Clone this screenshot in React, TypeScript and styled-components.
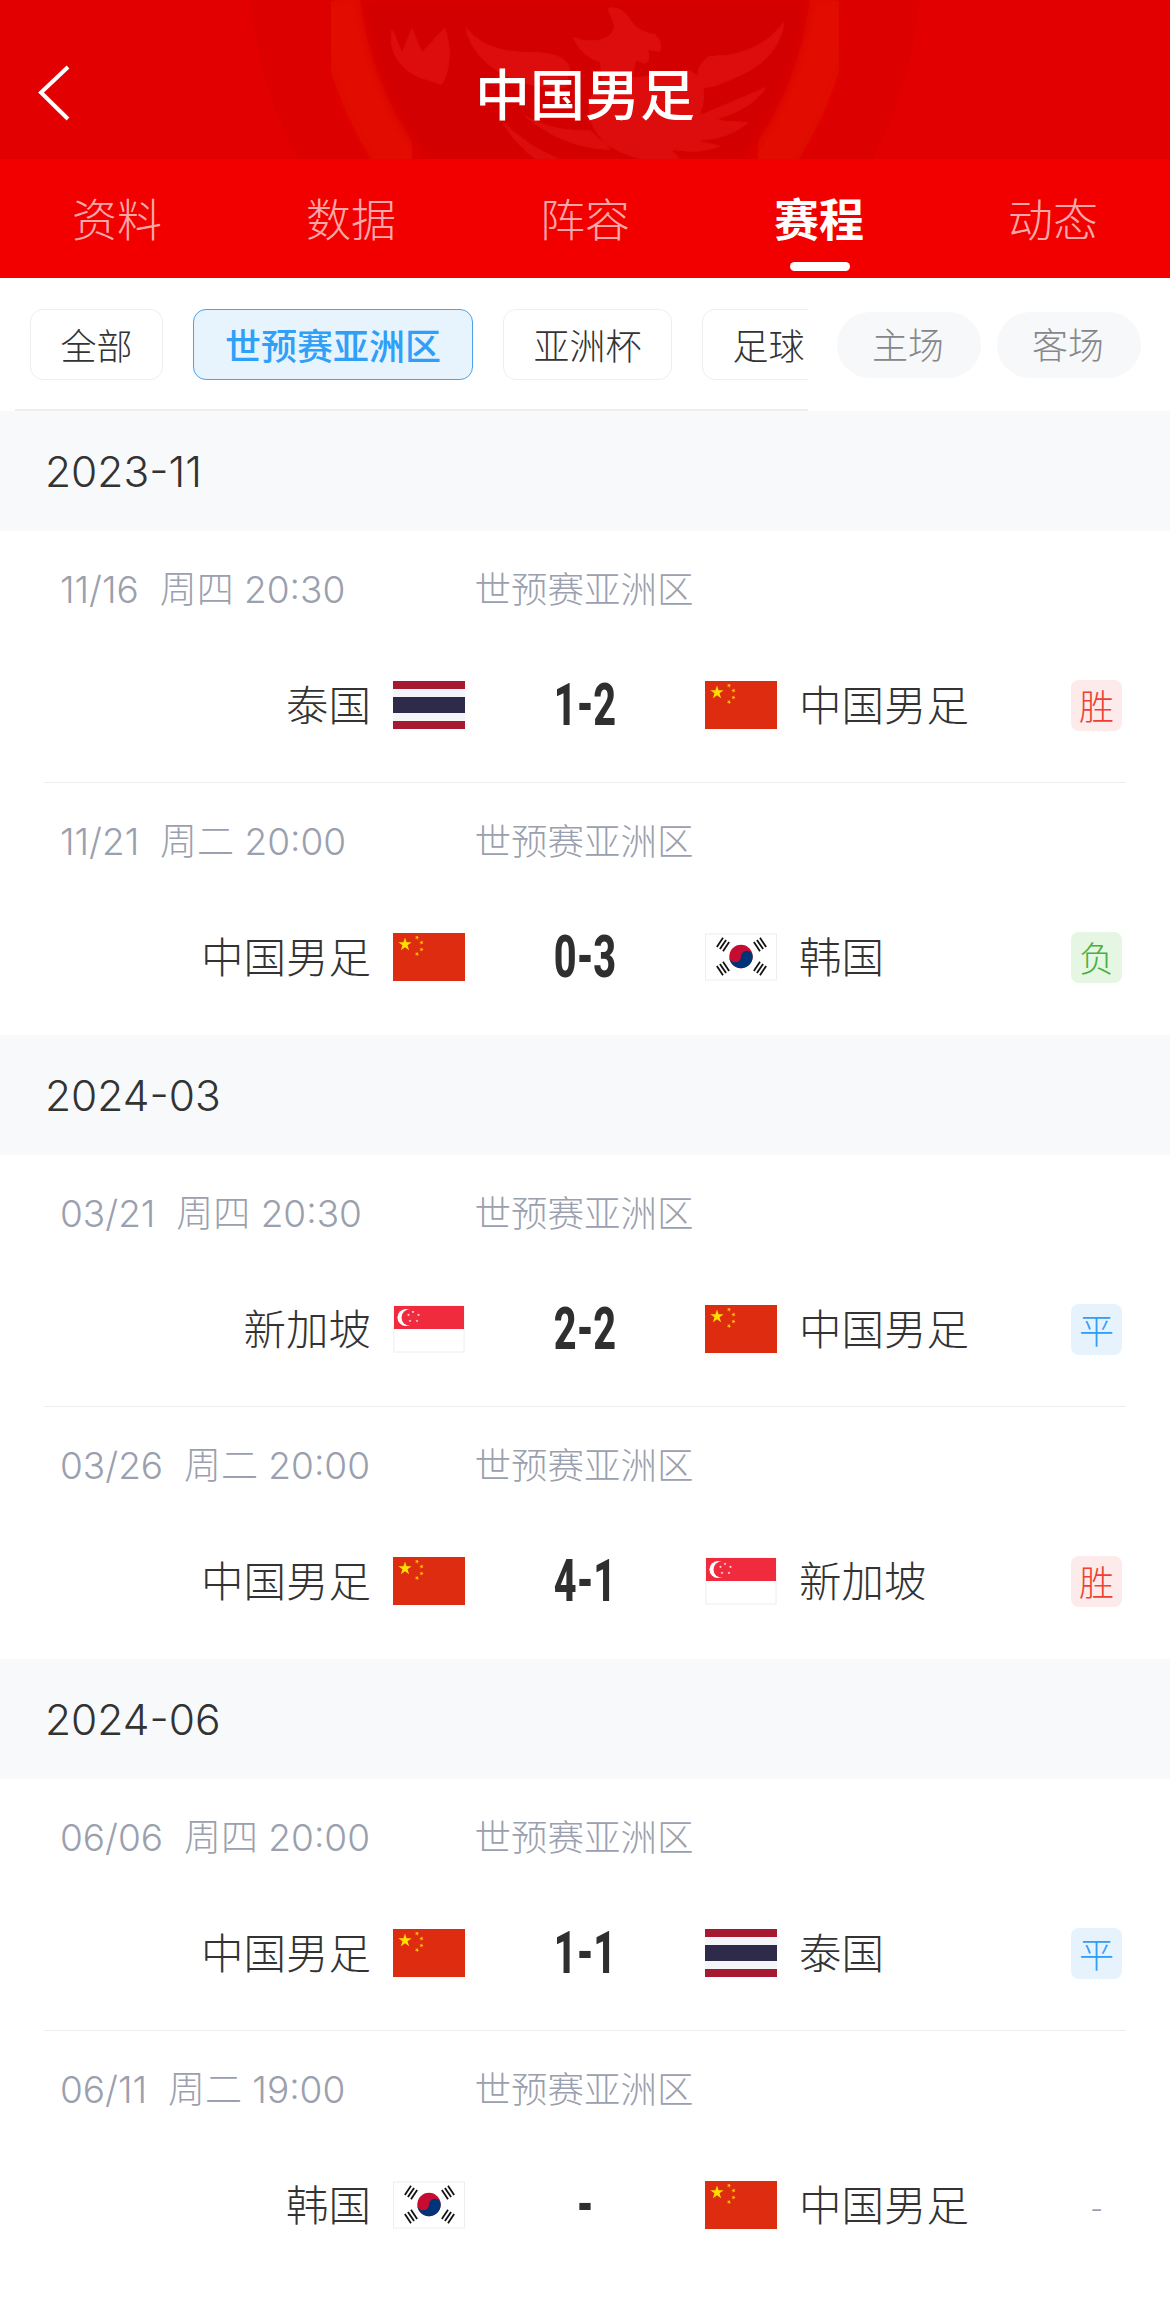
import React from "react";
import styled, { createGlobalStyle } from "styled-components";

const CJK = `"Noto Sans CJK SC", sans-serif`;
const MIX = `Inter, "Noto Sans CJK SC", sans-serif`;

const Global = createGlobalStyle`
  html, body { margin: 0; padding: 0; background: #fff; }
  * { box-sizing: border-box; }
`;

const Page = styled.div`
  width: 1170px;
  height: 2307px;
  overflow: hidden;
  background: #fff;
  font-family: ${CJK};
  color: #333;
`;

const Header = styled.header`
  position: relative;
  height: 159px;
  background: #e20000;
  display: flex;
  align-items: center;
  justify-content: center;
  overflow: hidden;
`;

const Watermark = styled.svg`
  position: absolute;
  inset: 0;
  width: 1170px;
  height: 159px;
`;

const BackButton = styled.svg`
  position: absolute;
  left: 36px;
  top: 64px;
  width: 36px;
  height: 58px;
`;

const Title = styled.h1`
  position: relative;
  margin: 0;
  padding-top: 23px;
  font-size: 55px;
  font-weight: 500;
  line-height: 70px;
  color: #fff;
`;

const Tabs = styled.nav`
  height: 119px;
  background: #f20000;
  display: grid;
  grid-template-columns: repeat(5, 234px);
`;

const Tab = styled.div<{ $active?: boolean }>`
  position: relative;
  text-align: center;
  padding-top: 28px;
  font-size: 45px;
  line-height: 62px;
  font-weight: ${(p) => (p.$active ? 700 : 300)};
  color: ${(p) => (p.$active ? "#fff" : "rgba(255,255,255,0.68)")};
`;

const TabMark = styled.span`
  position: absolute;
  left: 88px;
  bottom: 7px;
  width: 60px;
  height: 9px;
  border-radius: 5px;
  background: #fff;
`;

const FilterBar = styled.div`
  height: 133px;
  display: flex;
  background: #fff;
`;

const TagScroller = styled.div`
  width: 793px;
  margin-left: 15px;
  padding: 31px 0 0 15px;
  display: flex;
  gap: 30px;
  overflow: hidden;
  border-bottom: 2px solid #eeeeef;
`;

const Tag = styled.div<{ $active?: boolean }>`
  flex: none;
  height: 71px;
  padding: 0 ${(p) => (p.$active ? 31 : 29.5)}px 2px;
  display: flex;
  align-items: center;
  font-size: 36px;
  font-weight: ${(p) => (p.$active ? 500 : 300)};
  border-radius: 13px;
  border: 1.5px solid ${(p) => (p.$active ? "#4da3ea" : "#eeeeef")};
  background: ${(p) => (p.$active ? "#e7f4fe" : "#fff")};
  color: ${(p) => (p.$active ? "#2f9ff7" : "#333")};
`;

const Pills = styled.div`
  margin-left: 29px;
  padding-top: 34px;
  display: flex;
  gap: 16px;
`;

const Pill = styled.div`
  width: 144px;
  height: 66px;
  padding: 0 2px 4px 0;
  border-radius: 33px;
  background: #f7f8fa;
  display: flex;
  align-items: center;
  justify-content: center;
  font-size: 36px;
  font-weight: 300;
  color: #85878b;
`;

const MonthBar = styled.div`
  height: 120px;
  padding-left: 45px;
  background: #f8f9fb;
  display: flex;
  align-items: center;
  font-family: ${MIX};
  font-size: 42.5px;
  font-weight: 300;
  color: #333;
`;

const Group = styled.section`
  padding-bottom: 1px;
`;

const Match = styled.article`
  height: 251px;
  padding-top: 29px;
`;

const Divider = styled.div`
  height: 1px;
  margin: 0 44px;
  background: #eeeeef;
`;

const MetaRow = styled.div`
  height: 54px;
  padding-left: 60px;
  display: grid;
  grid-template-columns: 414px 220px;
  align-items: center;
  font-size: 36.5px;
  font-weight: 300;
  color: #9aa0ae;
`;

const DateText = styled.span`
  font-family: ${MIX};
  font-size: 37px;
  white-space: pre;
`;

const League = styled.span`
  text-align: center;
`;

const ScoreRow = styled.div`
  margin-top: 67px;
  height: 48px;
  display: grid;
  grid-template-columns: 465px 240px 1fr;
  align-items: center;
`;

const Side = styled.div<{ $home?: boolean }>`
  display: flex;
  align-items: center;
  justify-content: ${(p) => (p.$home ? "flex-end" : "flex-start")};
  gap: 22px;
  height: 48px;
`;

const TeamName = styled.span`
  font-size: 42.5px;
  font-weight: 300;
  line-height: 48px;
  margin-top: -5px;
  color: #333;
`;

const Score = styled.div`
  text-align: center;
  font-family: Roboto, "Liberation Sans", sans-serif;
  font-size: 60px;
  font-weight: 800;
  line-height: 48px;
  color: #2f2f2f;
  transform: scaleX(0.66);
`;

const RESULT = {
  胜: { bg: "#fdeaea", fg: "#ee4035" },
  负: { bg: "#e5f6e3", fg: "#46b13c" },
  平: { bg: "#e6f3fd", fg: "#2f9ff7" },
  "-": { bg: "transparent", fg: "#9aa0ae" },
} as const;

type ResultKey = keyof typeof RESULT;

const Badge = styled.span<{ $kind: ResultKey }>`
  flex: none;
  margin-left: auto;
  margin-right: 48px;
  width: 51px;
  height: 51px;
  padding-bottom: 2px;
  border-radius: 8px;
  display: flex;
  align-items: center;
  justify-content: center;
  font-size: 35px;
  font-weight: 300;
  background: ${(p) => RESULT[p.$kind].bg};
  color: ${(p) => RESULT[p.$kind].fg};
`;

const FlagSvg = styled.svg`
  flex: none;
  display: block;
  width: 72px;
  height: 48px;
`;

function starPoints(cx: number, cy: number, r: number, rot = -90) {
  const pts: string[] = [];
  for (let i = 0; i < 10; i++) {
    const rad = i % 2 ? r * 0.382 : r;
    const a = ((rot + i * 36) * Math.PI) / 180;
    pts.push(`${(cx + rad * Math.cos(a)).toFixed(2)},${(cy + rad * Math.sin(a)).toFixed(2)}`);
  }
  return pts.join(" ");
}

const ChinaFlag = () => (
  <FlagSvg viewBox="0 0 72 48">
    <rect width="72" height="48" fill="#de2c10" />
    <polygon points={starPoints(12, 11.5, 7)} fill="#ffde00" />
    <polygon points={starPoints(24, 4.5, 2.4, -60)} fill="#ffc800" />
    <polygon points={starPoints(28.5, 9.5, 2.4, -30)} fill="#ffc800" />
    <polygon points={starPoints(28.5, 16.5, 2.4, 0)} fill="#ffc800" />
    <polygon points={starPoints(24, 21, 2.4, -60)} fill="#ffc800" />
  </FlagSvg>
);

const ThaiFlag = () => (
  <FlagSvg viewBox="0 0 72 48">
    <rect width="72" height="48" fill="#a51931" />
    <rect y="8" width="72" height="32" fill="#f4f5f8" />
    <rect y="16" width="72" height="16" fill="#2d2a4a" />
  </FlagSvg>
);

const SingaporeFlag = () => (
  <FlagSvg viewBox="0 0 72 48">
    <rect x="1" y="1" width="70" height="46" fill="#fff" stroke="#eeeeee" />
    <rect x="1" y="1" width="70" height="23" fill="#ef2b3d" />
    <circle cx="13" cy="12.5" r="8.6" fill="#fff" />
    <circle cx="16.5" cy="12.5" r="8" fill="#ef2b3d" />
    <polygon points={starPoints(20, 7, 1.6)} fill="#fff" />
    <polygon points={starPoints(25.5, 10, 1.6)} fill="#fff" />
    <polygon points={starPoints(24, 16, 1.6)} fill="#fff" />
    <polygon points={starPoints(17, 16, 1.6)} fill="#fff" />
    <polygon points={starPoints(15.5, 10, 1.6)} fill="#fff" />
  </FlagSvg>
);

const Trigram = ({ x, y, rot }: { x: number; y: number; rot: number }) => (
  <g transform={`translate(${x} ${y}) rotate(${rot})`} fill="#111">
    <rect x="-5.5" y="-4.6" width="11" height="1.8" />
    <rect x="-5.5" y="-0.9" width="11" height="1.8" />
    <rect x="-5.5" y="2.8" width="11" height="1.8" />
  </g>
);

const KoreaFlag = () => (
  <FlagSvg viewBox="0 0 72 48">
    <rect x="0.5" y="1" width="71" height="46" fill="#fff" stroke="#eeeeee" />
    <circle cx="36" cy="23.500" r="11.7" fill="#c60c30" />
    <path d="M24.3 23.500a5.85 5.85 0 0 0 11.7 0a5.85 5.85 0 0 1 11.7 0a11.7 11.7 0 0 1-23.4 0z" fill="#003478" />
    <Trigram x={18} y={11.5} rot={-56} />
    <Trigram x={55} y={11.5} rot={56} />
    <Trigram x={18} y={35.5} rot={56} />
    <Trigram x={55} y={35.5} rot={-56} />
  </FlagSvg>
);

const FLAGS = {
  cn: ChinaFlag,
  th: ThaiFlag,
  sg: SingaporeFlag,
  kr: KoreaFlag,
} as const;

type Team = { name: string; flag: keyof typeof FLAGS };

const CN: Team = { name: "中国男足", flag: "cn" };
const TH: Team = { name: "泰国", flag: "th" };
const SG: Team = { name: "新加坡", flag: "sg" };
const KR: Team = { name: "韩国", flag: "kr" };

type MatchData = { date: string; home: Team; away: Team; score: string; result: ResultKey };

const MONTHS: { month: string; matches: MatchData[] }[] = [
  {
    month: "2023-11",
    matches: [
      { date: "11/16  周四 20:30", home: TH, away: CN, score: "1-2", result: "胜" },
      { date: "11/21  周二 20:00", home: CN, away: KR, score: "0-3", result: "负" },
    ],
  },
  {
    month: "2024-03",
    matches: [
      { date: "03/21  周四 20:30", home: SG, away: CN, score: "2-2", result: "平" },
      { date: "03/26  周二 20:00", home: CN, away: SG, score: "4-1", result: "胜" },
    ],
  },
  {
    month: "2024-06",
    matches: [
      { date: "06/06  周四 20:00", home: CN, away: TH, score: "1-1", result: "平" },
      { date: "06/11  周二 19:00", home: KR, away: CN, score: "-", result: "-" },
    ],
  },
];

const TABS = ["资料", "数据", "阵容", "赛程", "动态"];
const TAGS = ["全部", "世预赛亚洲区", "亚洲杯", "足球"];

const HeaderArt = () => (
  <Watermark viewBox="0 0 1170 159" aria-hidden="true">
    <defs>
      <filter id="soft" x="-10%" y="-10%" width="120%" height="120%">
        <feGaussianBlur stdDeviation="6" />
      </filter>
      <filter id="soft2" x="-5%" y="-5%" width="110%" height="110%">
        <feGaussianBlur stdDeviation="1" />
      </filter>
    </defs>
    <path d="M250 0Q262 95 298 159H872Q908 95 920 0Z" fill="#dd0000" />
    <path d="M338 0Q350 95 405 170" fill="none" stroke="#e20e06" strokeWidth="44" filter="url(#soft)" />
    <path d="M832 0Q820 95 765 170" fill="none" stroke="#e20e06" strokeWidth="44" filter="url(#soft)" />
    <path d="M362 0Q376 100 430 159H740Q794 100 808 0Z" fill="#d20000" filter="url(#soft)" />
    <g fill="#dd100a" filter="url(#soft2)">
      <path d="M392 27L402 52L412 27L422 52L445 27Q456 60 442 85L420 78Q385 62 392 27Z" />
      <path d="M465 25Q482 52 530 52Q566 52 570 68L566 88Q520 90 490 66Q468 48 465 25Z" />
      <path d="M785 20Q780 60 735 78Q715 88 702 88Q690 70 709 56Q760 56 785 20Z" />
      <path d="M607 8Q622 4 632 22Q640 32 655 34Q664 42 660 52L648 50Q652 62 644 64L636 60L632 82H602L600 62Q582 58 572 36Q590 44 604 38Q618 32 612 20Z" />
      <path d="M600 82L690 70Q712 85 700 115L768 86Q752 110 715 120L750 122Q725 142 695 140L722 146Q700 155 672 150L680 159H640Q600 150 590 120Q585 100 600 82Z" />
      <path d="M515 108Q545 132 590 130L612 150Q560 150 515 108Z" />
      <path d="M500 118Q525 145 560 159H535Q512 142 500 118Z" />
    </g>
  </Watermark>
);

export default function App() {
  return (
    <Page>
      <Global />
      <Header>
        <HeaderArt />
        <BackButton viewBox="0 0 36 58" aria-label="返回">
          <path d="M32 3L5 28.500L32 55" fill="none" stroke="#fff" strokeWidth="4" />
        </BackButton>
        <Title>中国男足</Title>
      </Header>
      <Tabs>
        {TABS.map((t) => (
          <Tab key={t} $active={t === "赛程"}>
            {t}
            {t === "赛程" && <TabMark />}
          </Tab>
        ))}
      </Tabs>
      <FilterBar>
        <TagScroller>
          {TAGS.map((t) => (
            <Tag key={t} $active={t === "世预赛亚洲区"}>
              {t}
            </Tag>
          ))}
        </TagScroller>
        <Pills>
          <Pill>主场</Pill>
          <Pill>客场</Pill>
        </Pills>
      </FilterBar>
      {MONTHS.map((m) => (
        <Group key={m.month}>
          <MonthBar>{m.month}</MonthBar>
          {m.matches.map((g, i) => {
            const Home = FLAGS[g.home.flag];
            const Away = FLAGS[g.away.flag];
            return (
              <React.Fragment key={g.date}>
                {i > 0 && <Divider />}
                <Match>
                  <MetaRow>
                    <DateText>{g.date}</DateText>
                    <League>世预赛亚洲区</League>
                  </MetaRow>
                  <ScoreRow>
                    <Side $home>
                      <TeamName>{g.home.name}</TeamName>
                      <Home />
                    </Side>
                    <Score>{g.score}</Score>
                    <Side>
                      <Away />
                      <TeamName>{g.away.name}</TeamName>
                      <Badge $kind={g.result}>{g.result}</Badge>
                    </Side>
                  </ScoreRow>
                </Match>
              </React.Fragment>
            );
          })}
        </Group>
      ))}
    </Page>
  );
}
